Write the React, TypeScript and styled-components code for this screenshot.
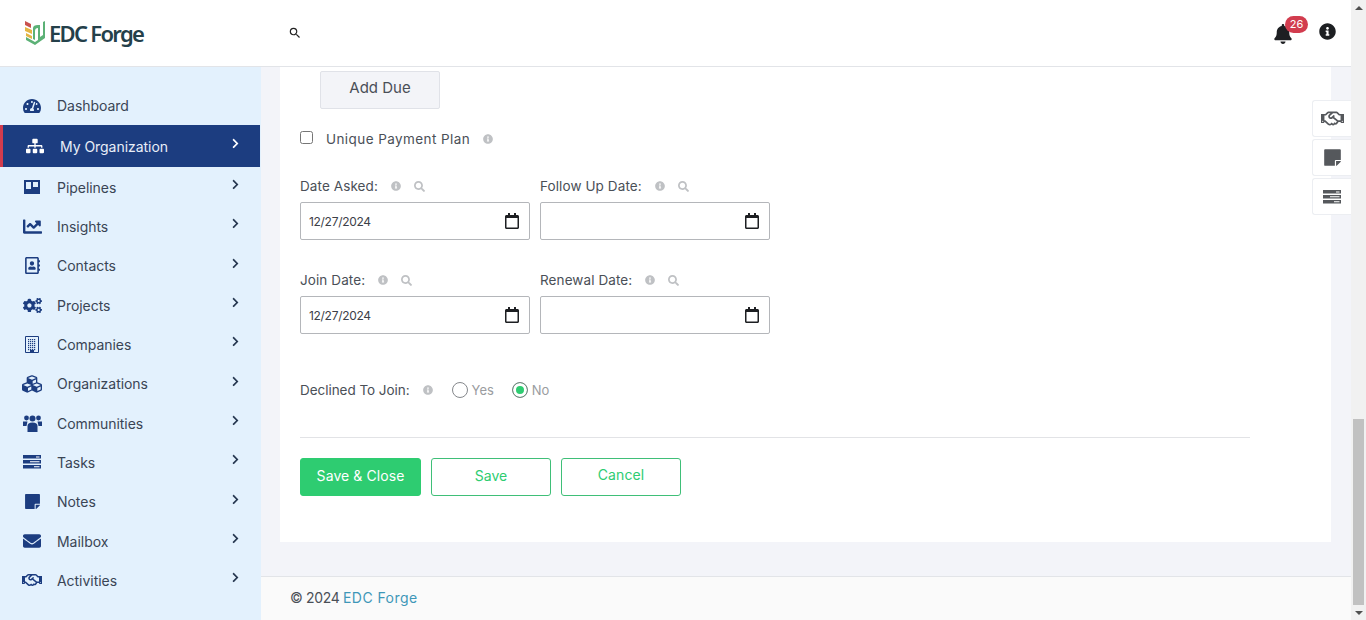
import React from 'react';
import styled, { createGlobalStyle } from 'styled-components';
import {
  FaBell,
  FaChartLine,
  FaChevronRight,
  FaCogs,
  FaCubes,
  FaEnvelope,
  FaInfoCircle,
  FaRegAddressBook,
  FaRegCalendar,
  FaRegHandshake,
  FaSearch,
  FaSitemap,
  FaStickyNote,
  FaTachometerAlt,
} from 'react-icons/fa';
import { MdSearch } from 'react-icons/md';

const FONT = `Inter, "Liberation Sans", sans-serif`;
const NAVY = '#1c3d80';
const GREEN = '#2ecc71';

const GlobalStyle = createGlobalStyle`
  html, body {
    margin: 0;
    height: 100%;
    overflow: hidden;
    background: #fff;
    font-family: ${FONT};
  }
  * {
    box-sizing: border-box;
  }
`;

const Page = styled.div`
  display: flex;
  width: 1366px;
  height: 620px;
  position: relative;
`;
const Viewport = styled.div`
  display: flex;
  flex-direction: column;
  flex: 1;
  min-width: 0;
`;
const Header = styled.header`
  display: flex;
  align-items: center;
  height: 67px;
  flex: none;
  background: #fff;
  border-bottom: 1px solid #e2e4e8;
  padding: 0 15px 0 25px;
`;
const Logo = styled.div`
  display: flex;
  align-items: center;
  gap: 3px;
  width: 263px;
  color: #24404a;
  font: 600 22px 'Noto Sans', sans-serif;
  letter-spacing: -1.7px;
`;
const HeaderSearch = styled.div`
  display: flex;
  color: #222;
`;
const HeaderRight = styled.div`
  display: flex;
  align-items: center;
  margin-left: auto;
  gap: 26px;
`;
const BellWrap = styled.div`
  position: relative;
  display: flex;
  color: #1d1f22;
  margin-top: 2px;
`;
const Badge = styled.span`
  position: absolute;
  left: 12px;
  top: -8px;
  width: 23px;
  height: 17px;
  border-radius: 9px;
  background: #d23c4e;
  color: #fff;
  font-size: 11px;
  line-height: 17px;
  text-align: center;
`;
const InfoBtn = styled.div`
  display: flex;
  color: #1d1f22;
  margin-top: -3px;
`;
const Body = styled.div`
  display: flex;
  flex: 1;
  min-height: 0;
`;
const Sidebar = styled.nav`
  width: 261px;
  flex: none;
  background: #e3f1fd;
  padding: 19px 1px 0 0;
`;
const NavRow = styled.div<{ $active?: boolean }>`
  display: flex;
  align-items: center;
  height: ${(p) => (p.$active ? '42px' : '39.35px')};
  padding-left: 22px;
  padding-right: 19px;
  background: ${(p) => (p.$active ? NAVY : 'transparent')};
  border-left: ${(p) => (p.$active ? '3px solid #d23c4e' : 'none')};
  color: ${(p) => (p.$active ? '#e8eef8' : '#3a4555')};
  font-size: 14px;
  letter-spacing: -0.04px;
`;
const NavIcon = styled.span<{ $active?: boolean; $size?: number }>`
  display: flex;
  justify-content: center;
  width: 20px;
  margin-right: 15px;
  color: ${(p) => (p.$active ? '#fff' : NAVY)};
  font-size: ${(p) => p.$size ?? 18}px;
`;
const NavChevron = styled.span<{ $active?: boolean }>`
  display: flex;
  margin-left: auto;
  margin-top: -5px;
  color: ${(p) => (p.$active ? '#fff' : '#263750')};
  font-size: 11px;
`;
const Main = styled.main`
  display: flex;
  flex-direction: column;
  flex: 1;
  min-width: 0;
  background: #f3f4f9;
`;
const Card = styled.section`
  margin: 0 20px 0 19px;
  height: 475px;
  flex: none;
  background: #fff;
  padding: 4px 81px 0 20px;
`;
const AddDue = styled.button`
  display: block;
  width: 120px;
  height: 38px;
  margin-left: 20px;
  padding: 0 0 5px;
  background: #f3f4f8;
  border: 1px solid #e0e2e8;
  border-radius: 2px;
  color: #4a4f57;
  font: 15px ${FONT};
`;
const CheckRow = styled.label`
  display: flex;
  align-items: center;
  height: 16px;
  margin-top: 22px;
  color: #4a4f57;
  font-size: 13.5px;
  letter-spacing: 0.42px;
`;
const Check = styled.input`
  width: 13px;
  height: 13px;
  margin: -3px 13px 0 0;
`;
const Hint = styled.span<{ $gap: number; $size?: number }>`
  display: inline-flex;
  margin-left: ${(p) => p.$gap}px;
  color: #bfc1c4;
  font-size: ${(p) => p.$size ?? 10}px;
`;
const DateGrid = styled.div<{ $top: number }>`
  display: grid;
  grid-template-columns: 230px 230px;
  column-gap: 10px;
  margin-top: ${(p) => p.$top}px;
`;
const FieldLabel = styled.div`
  display: flex;
  align-items: center;
  height: 18px;
  margin-bottom: 7px;
  color: #4a4f57;
  font-size: 13.5px;
  letter-spacing: 0.1px;
`;
const InputWrap = styled.div`
  position: relative;
`;
const DateInput = styled.input`
  display: block;
  width: 100%;
  height: 38px;
  padding: 0 8px;
  border: 1px solid #b4b6ba;
  border-radius: 2px;
  background: #fff;
  color: #3c4048;
  font: 12px ${FONT};
  letter-spacing: -0.3px;
  outline: none;
`;
const CalIcon = styled.span`
  position: absolute;
  right: 10px;
  top: 11px;
  display: flex;
  color: #1d1f22;
  font-size: 16px;
`;
const RadioRow = styled.div`
  display: flex;
  align-items: center;
  height: 18px;
  margin-top: 47px;
  color: #4a4f57;
  font-size: 13.5px;
  letter-spacing: -0.04px;
`;
const RadioOption = styled.span<{ $left: number }>`
  display: inline-flex;
  align-items: center;
  gap: 4px;
  margin-left: ${(p) => p.$left}px;
  color: #9a9ca0;
  font-size: 13px;
`;
const RadioDot = styled.span<{ $on?: boolean }>`
  width: 16px;
  height: 16px;
  border-radius: 50%;
  border: 1px solid ${(p) => (p.$on ? '#7a7d80' : '#85888c')};
  background: ${(p) => (p.$on ? GREEN : '#fff')};
  box-shadow: ${(p) => (p.$on ? 'inset 0 0 0 3px #fff' : 'none')};
`;
const Divider = styled.hr`
  margin: 38px 0 20px;
  border: 0;
  border-top: 1px solid #e2e3e6;
`;
const Actions = styled.div`
  display: flex;
  gap: 10px;
`;
const ActionBtn = styled.button<{ $solid?: boolean; $w: number; $lift?: number }>`
  width: ${(p) => p.$w}px;
  height: 38px;
  padding: 0 0 ${(p) => p.$lift ?? 4}px;
  border: 1px solid ${(p) => (p.$solid ? GREEN : '#3fbf78')};
  border-radius: 3px;
  background: ${(p) => (p.$solid ? GREEN : '#fff')};
  color: ${(p) => (p.$solid ? '#fff' : GREEN)};
  font: 14px ${FONT};
  letter-spacing: 0.08px;
`;
const Footer = styled.footer`
  display: flex;
  align-items: center;
  margin-top: auto;
  height: 44px;
  flex: none;
  padding: 0 0 2px 29px;
  background: #fafafa;
  border-top: 1px solid #e2e4e8;
  color: #4a4f57;
  font-size: 14px;
  letter-spacing: -0.35px;
  white-space: pre;
`;
const FooterLink = styled.span`
  color: #3e97b8;
  letter-spacing: 0.45px;
`;
const SideTools = styled.div`
  position: absolute;
  right: 15px;
  top: 100px;
  display: flex;
  flex-direction: column;
  gap: 2px;
`;
const ToolBtn = styled.div<{ $size?: number }>`
  display: flex;
  align-items: center;
  justify-content: center;
  width: 39px;
  height: 37px;
  background: #fff;
  border: 1px solid #eceef2;
  border-right: 0;
  border-radius: 3px 0 0 3px;
  color: #55585c;
  font-size: ${(p) => p.$size ?? 19}px;
`;
const Scrollbar = styled.div`
  display: flex;
  flex-direction: column;
  align-items: center;
  width: 15px;
  flex: none;
  background: #f1f1f1;
`;
const ScrollArrow = styled.span<{ $down?: boolean }>`
  width: 0;
  height: 0;
  margin: ${(p) => (p.$down ? '6px 0 5px' : '6px 0 0')};
  border-left: 4px solid transparent;
  border-right: 4px solid transparent;
  border-${(p) => (p.$down ? 'top' : 'bottom')}: 4px solid #505050;
`;
const ScrollThumb = styled.div`
  width: 11px;
  height: 186px;
  margin-top: auto;
  background: #c1c1c1;
`;

function LogoMark() {
  return (
    <svg width="21" height="26" viewBox="0 0 21 26" aria-hidden="true">
      <path d="M0 1l6 3v4L0 5z" fill="#c9524f" />
      <path d="M0 7l7 3v4L0 11z" fill="#e3b544" />
      <path d="M1 13l6 3v3l-6-3z" fill="#e3b544" />
      <path
        d="M20 1v17l-10 7-9-5v-3l9 5 3-2V8c-2 0-3 1-3 3v9l-2-1V8c0-2 2-3 5-3h2v12l3-2V2z"
        fill="#5cb176"
      />
    </svg>
  );
}

function PipelinesIcon() {
  return (
    <svg width="16" height="16" viewBox="0 0 16 16" aria-hidden="true">
      <path d="M0 1h16v14H0z" fill={NAVY} />
      <path d="M2 3h5v7H2zM9 3h5v5H9z" fill="#e3f1fd" />
    </svg>
  );
}

function CompaniesIcon() {
  const dots = [];
  for (let y = 3; y < 14; y += 2) {
    for (let x = 3; x < 11; x += 2) {
      dots.push(<rect key={`${x}-${y}`} x={x} y={y} width="1.2" height="1.2" />);
    }
  }
  return (
    <svg width="14" height="17" viewBox="0 0 14 17" fill={NAVY} aria-hidden="true">
      <path d="M.5.5h13v16H.5z" fill="none" stroke={NAVY} />
      {dots}
      <path d="M5 14h4v3H5z" />
    </svg>
  );
}

function CommunitiesIcon() {
  return (
    <svg width="19" height="17" viewBox="0 0 19 17" fill={NAVY} aria-hidden="true">
      <circle cx="3.5" cy="3" r="2.4" />
      <circle cx="15.5" cy="3" r="2.4" />
      <circle cx="9.5" cy="3.5" r="3" />
      <path d="M0 6.5h4.5L3.5 11H0zM19 6.5h-4.5l1 4.5H19z" />
      <path d="M4.5 17v-6c0-2 1.5-3.5 5-3.5s5 1.5 5 3.5v6z" />
    </svg>
  );
}

function BarsIcon(props: { color: string }) {
  return (
    <svg width="18" height="14" viewBox="0 0 18 14" aria-hidden="true">
      <path d="M0 0h18v3.5H0zM0 5h18v3.5H0zM0 10h18v3.5H0z" fill={props.color} />
      <path d="M13 1.500h3.500v1H13zM7 6.300h9.500v1H7zM11 11.300h5.500v1H11z" fill="#fff" />
    </svg>
  );
}

const NAV_ITEMS = [
  { label: 'Pipelines', icon: <PipelinesIcon /> },
  { label: 'Insights', icon: <FaChartLine />, size: 19 },
  { label: 'Contacts', icon: <FaRegAddressBook />, size: 17 },
  { label: 'Projects', icon: <FaCogs />, size: 19 },
  { label: 'Companies', icon: <CompaniesIcon /> },
  { label: 'Organizations', icon: <FaCubes />, size: 20 },
  { label: 'Communities', icon: <CommunitiesIcon /> },
  { label: 'Tasks', icon: <BarsIcon color={NAVY} /> },
  { label: 'Notes', icon: <FaStickyNote />, size: 17 },
  { label: 'Mailbox', icon: <FaEnvelope /> },
  { label: 'Activities', icon: <FaRegHandshake />, size: 22 },
];

function DateField(props: { label: string; value?: string }) {
  return (
    <div>
      <FieldLabel>
        {props.label}
        <Hint $gap={13}><FaInfoCircle /></Hint>
        <Hint $gap={13} $size={11}><FaSearch /></Hint>
      </FieldLabel>
      <InputWrap>
        <DateInput readOnly value={props.value ?? ''} />
        <CalIcon><FaRegCalendar /></CalIcon>
      </InputWrap>
    </div>
  );
}

export default function App() {
  return (
    <Page>
      <GlobalStyle />
      <Viewport>
        <Header>
          <Logo>
            <LogoMark />
            EDC Forge
          </Logo>
          <HeaderSearch><MdSearch size={14} /></HeaderSearch>
          <HeaderRight>
            <BellWrap>
              <FaBell size={20} />
              <Badge>26</Badge>
            </BellWrap>
            <InfoBtn><FaInfoCircle size={17} /></InfoBtn>
          </HeaderRight>
        </Header>
        <Body>
          <Sidebar>
            <NavRow>
              <NavIcon><FaTachometerAlt /></NavIcon>
              Dashboard
            </NavRow>
            <NavRow $active>
              <NavIcon $active><FaSitemap /></NavIcon>
              My Organization
              <NavChevron $active><FaChevronRight /></NavChevron>
            </NavRow>
            {NAV_ITEMS.map((item) => (
              <NavRow key={item.label}>
                <NavIcon $size={item.size}>{item.icon}</NavIcon>
                {item.label}
                <NavChevron><FaChevronRight /></NavChevron>
              </NavRow>
            ))}
          </Sidebar>
          <Main>
            <Card>
              <AddDue>Add Due</AddDue>
              <CheckRow>
                <Check type="checkbox" />
                Unique Payment Plan
                <Hint $gap={13}><FaInfoCircle /></Hint>
              </CheckRow>
              <DateGrid $top={30}>
                <DateField label="Date Asked:" value="12/27/2024" />
                <DateField label="Follow Up Date:" />
              </DateGrid>
              <DateGrid $top={31}>
                <DateField label="Join Date:" value="12/27/2024" />
                <DateField label="Renewal Date:" />
              </DateGrid>
              <RadioRow>
                Declined To Join:
                <Hint $gap={13}><FaInfoCircle /></Hint>
                <RadioOption $left={19}><RadioDot />Yes</RadioOption>
                <RadioOption $left={18}><RadioDot $on />No</RadioOption>
              </RadioRow>
              <Divider />
              <Actions>
                <ActionBtn $solid $w={121}>Save &amp; Close</ActionBtn>
                <ActionBtn $w={120}>Save</ActionBtn>
                <ActionBtn $w={120} $lift={6}>Cancel</ActionBtn>
              </Actions>
            </Card>
            <Footer>
              © 2024 <FooterLink>EDC Forge</FooterLink>
            </Footer>
          </Main>
        </Body>
      </Viewport>
      <Scrollbar>
        <ScrollArrow />
        <ScrollThumb />
        <ScrollArrow $down />
      </Scrollbar>
      <SideTools>
        <ToolBtn $size={23}><FaRegHandshake /></ToolBtn>
        <ToolBtn><FaStickyNote /></ToolBtn>
        <ToolBtn><BarsIcon color="#55585c" /></ToolBtn>
      </SideTools>
    </Page>
  );
}
